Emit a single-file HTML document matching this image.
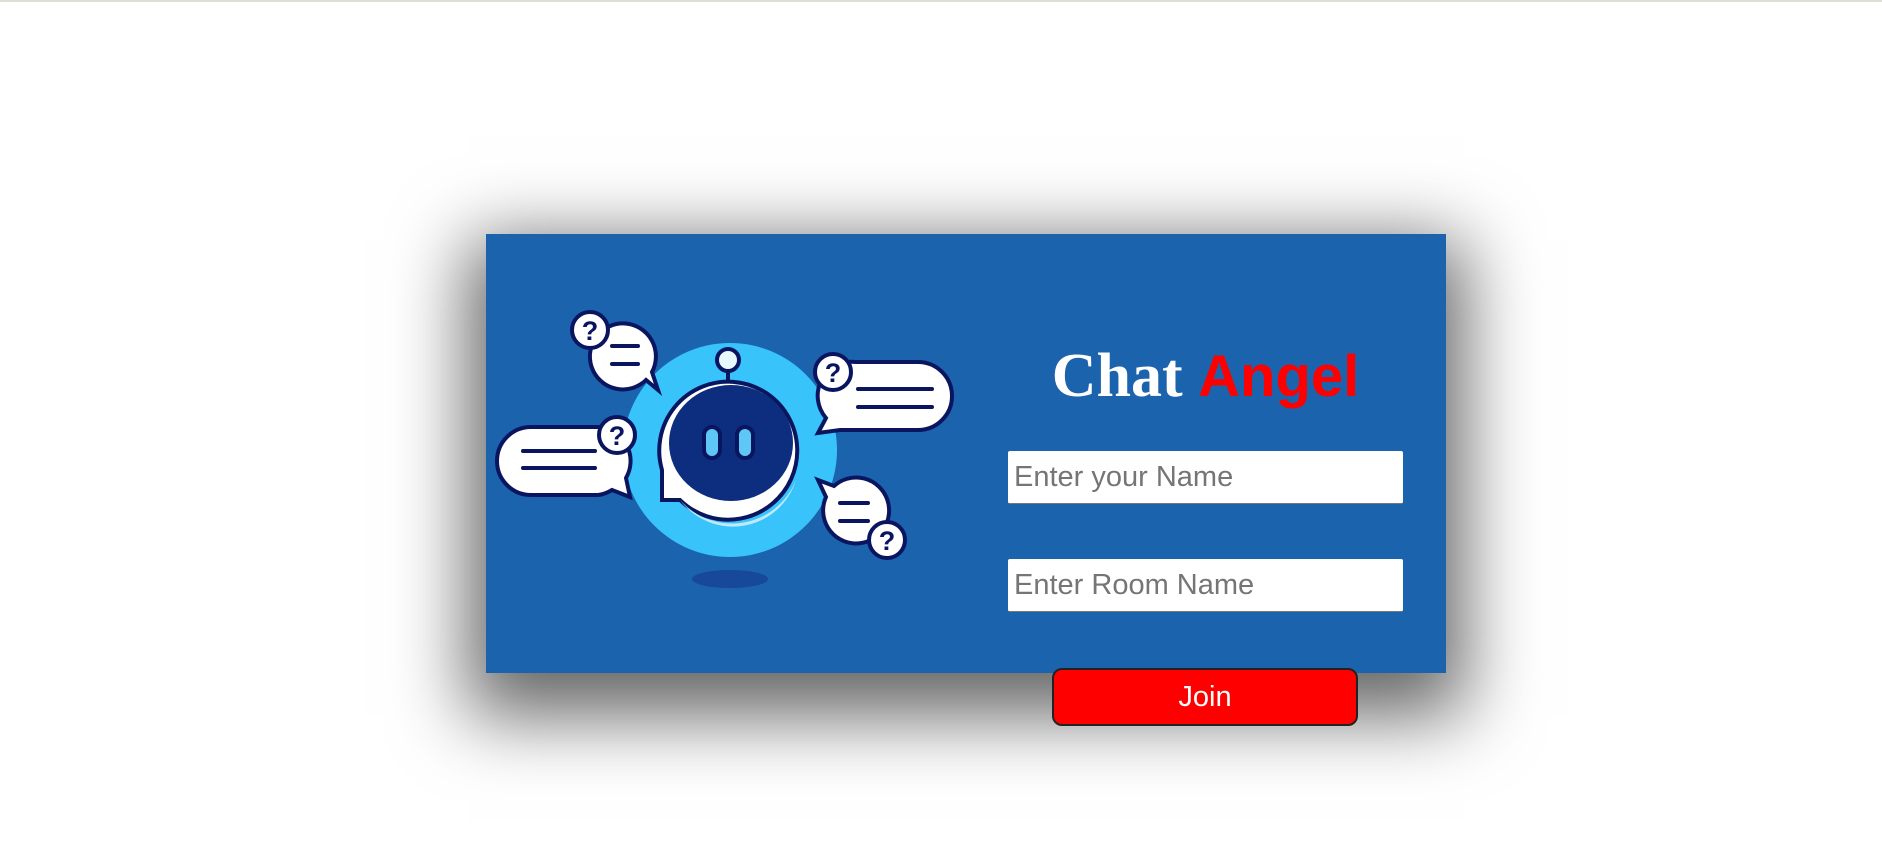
<!DOCTYPE html>
<html><head><meta charset="utf-8"><style>
html,body{margin:0;padding:0;width:1882px;height:849px;background:#fff;overflow:hidden;font-family:"Liberation Sans",sans-serif;}
.top{position:absolute;left:0;top:0;width:1882px;height:2px;background:#dcdfd6}
.card{position:absolute;left:486px;top:234px;width:960px;height:439px;background:#1c63ad;box-shadow:0 25px 70px 18px rgba(0,0,0,0.6);}
h1{position:absolute;left:1008px;width:395px;top:338px;margin:0;text-align:center;font:bold 62px "Liberation Serif",serif;color:#fff;line-height:76px}
h1 span{color:#f00;font-family:"Liberation Sans",sans-serif;font-size:58px}
.in{position:absolute;left:1008px;width:395px;height:53px;background:#fff;border-radius:2px;box-sizing:border-box;border-bottom:1px solid #777;color:#757575;font-size:29px;line-height:53px;padding-left:6px}
.btn{position:absolute;left:1052px;top:668px;width:306px;height:58px;box-sizing:border-box;background:#f00;border:2px solid #222;border-radius:10px;color:#fff;font-size:29px;text-align:center;line-height:54px}
svg{position:absolute;left:0;top:0}
</style></head><body>
<div class="top"></div>
<div class="card"></div>
<svg width="1882" height="849" viewBox="0 0 1882 849">
<g stroke="#0a1560" stroke-width="4" stroke-linecap="round">
<circle cx="730" cy="450" r="107" fill="#38c3fb" stroke="none"/>
<ellipse cx="730" cy="579" rx="38" ry="9" fill="#17489a" stroke="none"/>
<path d="M658 390 L646 380 A33 33 0 1 1 652 372 Z" fill="#fff"/>
<circle cx="590" cy="330" r="18" fill="#fff"/>
<line x1="612" y1="346" x2="638" y2="346"/><line x1="612" y1="364" x2="638" y2="364"/>
<path d="M531 427 H598 A34 34 0 0 1 626 478 L630 497 L612 490 A34 34 0 0 1 598 495 H531 A34 34 0 0 1 531 427 Z" fill="#fff"/>
<circle cx="617" cy="435" r="18" fill="#fff"/>
<line x1="523" y1="451" x2="595" y2="451"/><line x1="523" y1="468" x2="595" y2="468"/>
<path d="M856 362 H918 A34 34 0 0 1 918 430 H840 L818 433 L826 418 A34 34 0 0 1 856 362 Z" fill="#fff"/>
<circle cx="833" cy="372" r="18" fill="#fff"/>
<line x1="858" y1="389" x2="932" y2="389"/><line x1="858" y1="407" x2="932" y2="407"/>
<path d="M818 480 L834 486 A33 33 0 1 1 826 497 Z" fill="#fff"/>
<circle cx="887" cy="540" r="18" fill="#fff"/>
<line x1="840" y1="503" x2="868" y2="503"/><line x1="840" y1="521" x2="868" y2="521"/>
<line x1="728" y1="370" x2="728" y2="387"/>
<circle cx="728" cy="360" r="11" fill="#e8f8ff"/>
<path d="M662 500 L662 470 A69 69 0 1 1 680 500 Z" fill="#fff"/>
<path d="M680 500 A69 69 0 0 0 796 480 A66 66 0 0 1 680 500Z" fill="#bfe9fb" stroke="none"/>
<ellipse cx="731" cy="443" rx="62" ry="58" fill="#0d2e7e" stroke="none"/>
<rect x="704" y="427" width="16" height="31" rx="8" fill="#5fc7f5"/>
<rect x="737" y="427" width="16" height="31" rx="8" fill="#5fc7f5"/>
</g>
<g font-family="Liberation Sans,sans-serif" font-weight="bold" font-size="27" fill="#0a1560" text-anchor="middle">
<text x="590" y="340">?</text><text x="617" y="445">?</text><text x="833" y="382">?</text><text x="887" y="550">?</text>
</g>
</svg>
<h1>Chat <span>Angel</span></h1>
<div class="in" style="top:451px">Enter your Name</div>
<div class="in" style="top:559px">Enter Room Name</div>
<div class="btn">Join</div>
</body></html>
